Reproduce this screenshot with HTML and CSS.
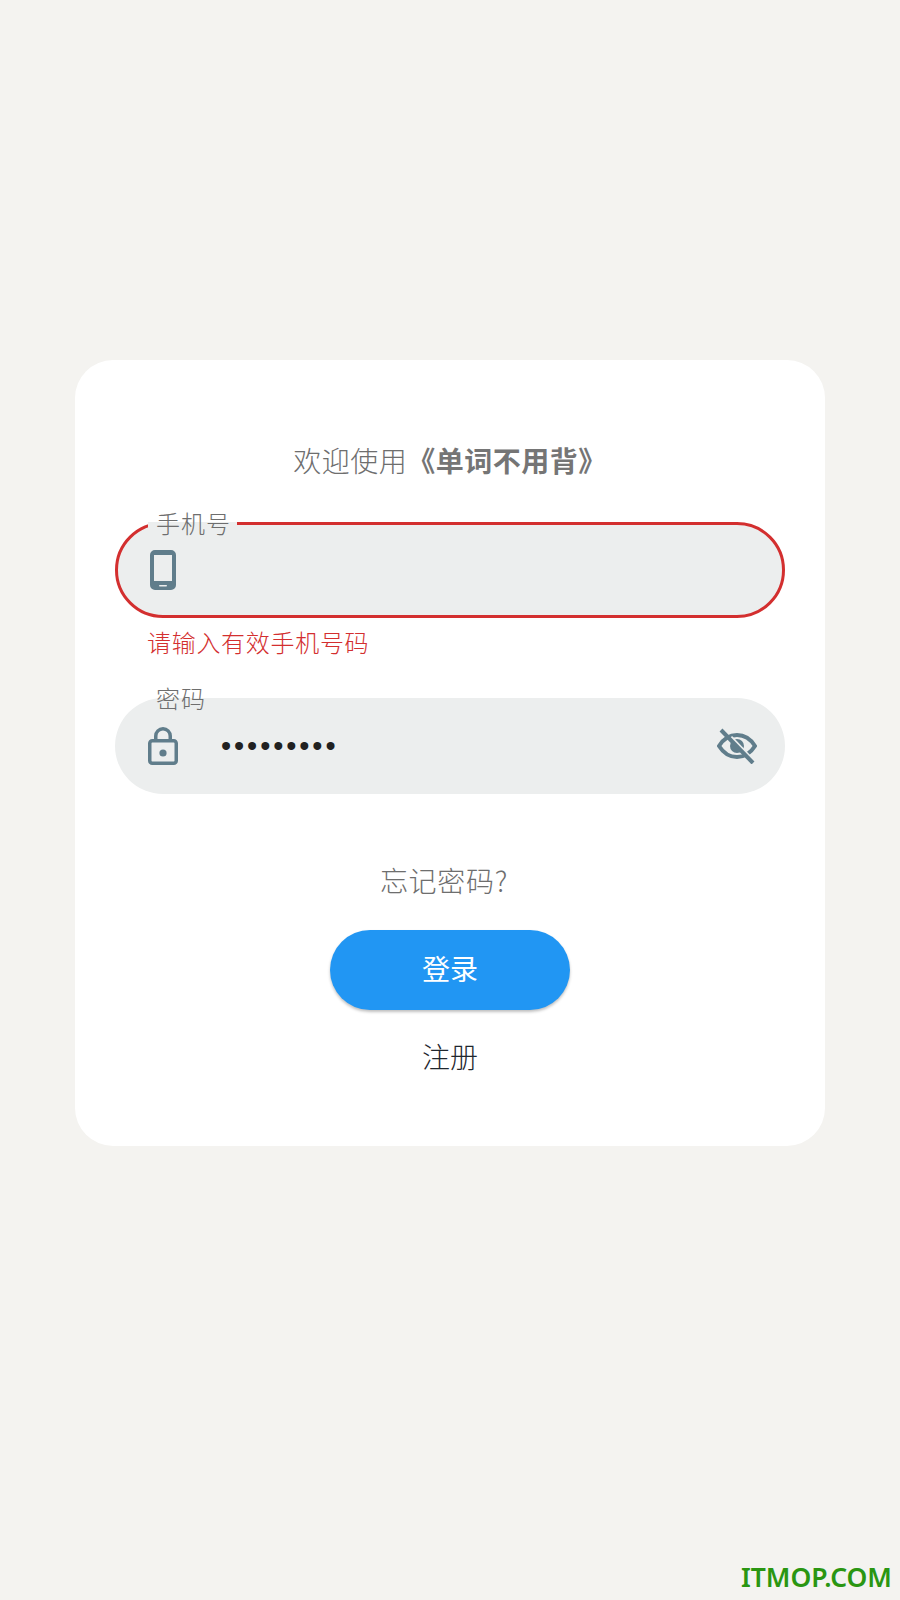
FILE: index.html
```html
<!DOCTYPE html>
<html lang="zh-CN">

<head>
    <meta charset="UTF-8">
    <meta name="viewport" content="width=device-width, initial-scale=1.0">
    <title>单词不用背</title>
    <link rel="stylesheet" href="styles.css">
</head>

<body>
    <div class="card">
        <p class="welcome">欢迎使用<b>《单词不用背》</b></p>

        <div class="field field-error">
            <span class="field-label">手机号</span>
            <svg class="icon-phone" viewBox="0 0 26 40">
                <path fill="#607d8b" fill-rule="evenodd" d="M5 0h16a5 5 0 0 1 5 5v30a5 5 0 0 1-5 5H5a5 5 0 0 1-5-5V5a5 5 0 0 1 5-5zM4 5v26h18V5z" />
                <rect x="9" y="35" width="8" height="1.6" rx="0.8" fill="#eceeee" />
            </svg>
            <input class="field-input" type="tel">
        </div>
        <p class="error-text">请输入有效手机号码</p>

        <div class="field field-password">
            <span class="field-label">密码</span>
            <svg class="icon-lock" viewBox="0 0 30 38">
                <path fill="none" stroke="#607d8b" stroke-width="3.5" d="M7.75 13V9a7.25 7.25 0 0 1 14.5 0v4" />
                <rect x="1.75" y="13.75" width="26.5" height="22.5" rx="2.5" fill="none" stroke="#607d8b" stroke-width="3.5" />
                <circle cx="15" cy="26" r="3.6" fill="#607d8b" />
            </svg>
            <input class="field-input password-input" type="password" value="123456789">
            <svg class="icon-eye" viewBox="0 0 40 36">
                <path fill="none" stroke="#607d8b" stroke-width="4" d="M2 18C7 10 13 7 20 7s13 3 18 11c-5 8-11 11-18 11S7 26 2 18z" />
                <circle cx="20" cy="18" r="7" fill="#607d8b" />
                <path fill="none" stroke="#eceeee" stroke-width="3" d="M14 9l19 20" />
                <path fill="none" stroke="#607d8b" stroke-width="4" d="M4 2l32 33" />
            </svg>
        </div>

        <p class="forgot">忘记密码?</p>
        <button class="login-btn">登录</button>
        <p class="register">注册</p>
    </div>

    <div class="watermark">ITMOP.COM</div>
</body>

</html>
```
FILE: styles.css
```css
* {
    box-sizing: border-box;
}

body {
    margin: 0;
    height: 1600px;
    padding-top: 360px;
    background-color: #f4f3f0;
    font-family: "Noto Sans CJK SC", sans-serif;
    font-weight: 300;
    position: relative;
    overflow: hidden;
}

.card {
    width: 750px;
    height: 786px;
    margin-left: 75px;
    padding: 80px 40px 0;
    background-color: white;
    border-radius: 38px;
    display: flex;
    flex-direction: column;
    align-items: center;
}

.welcome {
    margin: 0;
    height: 40px;
    line-height: 40px;
    font-size: 28px;
    letter-spacing: 0.5px;
    color: #6e6e6e;
}

.welcome b {
    font-weight: 700;
    color: #757575;
}

.field {
    position: relative;
    width: 670px;
    height: 96px;
    border-radius: 48px;
    background-color: #eceeee;
    display: flex;
    align-items: center;
}

.field-error {
    margin-top: 42px;
    border: 3px solid #d32f2f;
}

.field-password {
    margin-top: 36px;
}

.field-label {
    position: absolute;
    top: -16px;
    left: 33px;
    padding: 0 8px;
    font-size: 24px;
    line-height: 32px;
    letter-spacing: 1px;
    color: #6e6e6e;
}

.field-error .field-label {
    top: -18px;
    left: 30px;
    padding-right: 6px;
    background: linear-gradient(transparent 15px, #eceeee 15px);
}

.field-input {
    flex: 1;
    min-width: 0;
    height: 100%;
    border: none;
    outline: none;
    background: none;
    font-size: 26px;
    color: #212121;
}

.icon-phone {
    width: 26px;
    height: 40px;
    margin-left: 32px;
}

.icon-lock {
    width: 30px;
    height: 38px;
    margin-left: 33px;
}

.password-input {
    margin-left: 35px;
    padding: 0 8px;
    font-size: 29px;
    letter-spacing: 2.9px;
}

.icon-eye {
    width: 40px;
    height: 36px;
    margin-right: 28px;
}

.error-text {
    margin: 4px 0 0;
    width: 670px;
    padding-left: 32px;
    font-size: 24px;
    letter-spacing: 0.7px;
    line-height: 40px;
    color: #d32f2f;
}

.forgot {
    margin: 66px 12px 0 0;
    font-size: 28px;
    letter-spacing: 0.7px;
    line-height: 40px;
    color: #6e6e6e;
}

.login-btn {
    margin-top: 30px;
    width: 240px;
    height: 80px;
    padding: 0 0 4px;
    border: none;
    border-radius: 40px;
    background-color: #2196f3;
    box-shadow: 0 2px 3px rgba(0, 0, 0, 0.25);
    color: white;
    font-family: inherit;
    font-size: 28px;
    font-weight: 400;
}

.register {
    margin: 26px 0 0;
    font-size: 28px;
    line-height: 40px;
    color: #1f272e;
}

.watermark {
    position: absolute;
    right: 8px;
    bottom: 5px;
    font-family: "Noto Sans", sans-serif;
    font-size: 26.5px;
    font-weight: 600;
    color: #2a9612;
}
```
